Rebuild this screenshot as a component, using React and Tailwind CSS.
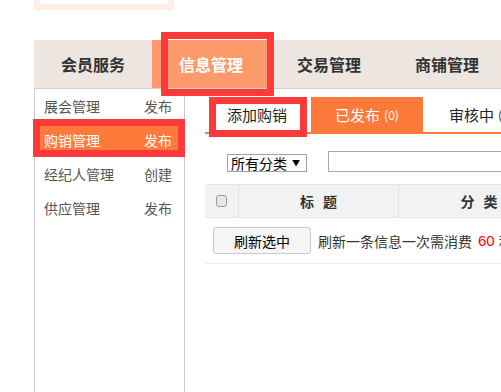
export default function App() {
  return (
    <div className="relative w-[501px] h-[392px] overflow-hidden bg-white font-['Noto_Sans_CJK_SC','Liberation_Sans',sans-serif]">
      <div className="w-[700px]">
        {/* top box */}
        <div className="ml-[34px] w-[140px] h-[10px] border-[6px] border-t-0 border-[#fdeee6]" />
        {/* nav */}
        <div className="mt-[30px] ml-[34px] h-[49px] bg-[#ede5e0] border-b border-[#cfcfcf] flex">
          <div className="w-[118px] flex items-center justify-center text-[16px] font-bold text-[#333] leading-none">会员服务</div>
          <div className="w-[118px] flex items-center justify-center text-[16px] font-bold text-white bg-[#fc9a6c] leading-none">信息管理</div>
          <div className="w-[118px] flex items-center justify-center text-[16px] font-bold text-[#333] leading-none">交易管理</div>
          <div className="w-[118px] flex items-center justify-center text-[16px] font-bold text-[#333] leading-none">商铺管理</div>
        </div>
        {/* main */}
        <div className="ml-[34px] flex h-[303px]">
          <div className="w-[151px] border-x border-[#cccccc] text-[14px] leading-none">
            {[
              ["展会管理", "发布", false],
              ["购销管理", "发布", true],
              ["经纪人管理", "创建", false],
              ["供应管理", "发布", false],
            ].map(([a, b, active]) => (
              <div
                key={a}
                className={
                  active
                    ? "h-[34px] flex items-center justify-between pl-[9px] pr-[12px] bg-[#fe7a3b] text-white"
                    : "h-[34px] flex items-center justify-between pl-[9px] pr-[12px] text-[#555]"
                }
              >
                <span>{a}</span>
                <span>{b}</span>
              </div>
            ))}
          </div>
          <div className="flex-1 pl-[20px] pt-[8px]">
            {/* tabs */}
            <div className="flex border-b-2 border-[#fe7a3a] h-[37px]">
              <div className="w-[104px] h-[35px] flex items-center justify-center text-[15px] text-[#222] leading-none">添加购销</div>
              <div className="ml-[2px] w-[112px] h-[35px] flex items-center justify-center text-[15px] text-white bg-[#fe7a3a] leading-none">
                已发布<span className="ml-[4px] text-[12px]">(0)</span>
              </div>
              <div className="ml-[2px] w-[112px] h-[35px] flex items-center justify-center text-[15px] text-[#222] leading-none">
                审核中<span className="ml-[4px] text-[12px]">(0)</span>
              </div>
            </div>
            {/* filter */}
            <div className="mt-[17px] flex items-center">
              <div className="ml-[22px] mt-[2px] w-[80px] h-[18px] border border-[#a0a0a0] flex items-center justify-between pl-[3px] pr-[6px] text-[14px] leading-none text-black">
                <span>所有分类</span>
                <span className="text-[8px]">▼</span>
              </div>
              <div className="ml-[21px] w-[300px] h-[21px] border border-[#aaaaaa]" />
            </div>
            {/* table header */}
            <div className="mt-[12px] h-[34px] bg-[#f2f2f2] border-y border-[#e6e6e6] flex text-[14px] font-bold text-[#333] leading-none">
              <div className="w-[34px] border-r border-[#e0e0e0] flex items-center justify-center">
                <div className="w-[11px] h-[12px] rounded-[3px] border border-[#999] bg-[#e8e8e8]" />
              </div>
              <div className="w-[160px] border-r border-[#e0e0e0] flex items-center justify-center gap-[9px]">
                <span>标</span>
                <span>题</span>
              </div>
              <div className="w-[160px] flex items-center justify-center gap-[9px]">
                <span>分</span>
                <span>类</span>
              </div>
            </div>
            {/* row */}
            <div className="h-[46px] border-b border-[#eeeeee] flex items-center text-[14px] leading-none">
              <div className="ml-[8px] w-[98px] h-[27px] rounded-[3px] border border-[#cccccc] bg-[#f5f5f5] flex items-center justify-center text-black">刷新选中</div>
              <div className="ml-[7px] text-[#333] whitespace-nowrap flex items-center">
                <span>刷新一条信息一次需消费</span>
                <span className="ml-[6px] text-[#ff0000] font-['Liberation_Sans',sans-serif] text-[15px]">60</span>
                <span className="ml-[4px]">积分</span>
              </div>
            </div>
          </div>
        </div>
      </div>
      {/* red annotation boxes */}
      <div className="absolute left-[161px] top-[32px] w-[113px] h-[64px] border-[7px] border-[#fc3a3c]" />
      <div className="absolute left-[33px] top-[119px] w-[152px] h-[38px] border-[7px] border-[#fc3a3c]" />
      <div className="absolute left-[209px] top-[97px] w-[98px] h-[40px] border-[7px] border-[#fc3a3c]" />
    </div>
  );
}
